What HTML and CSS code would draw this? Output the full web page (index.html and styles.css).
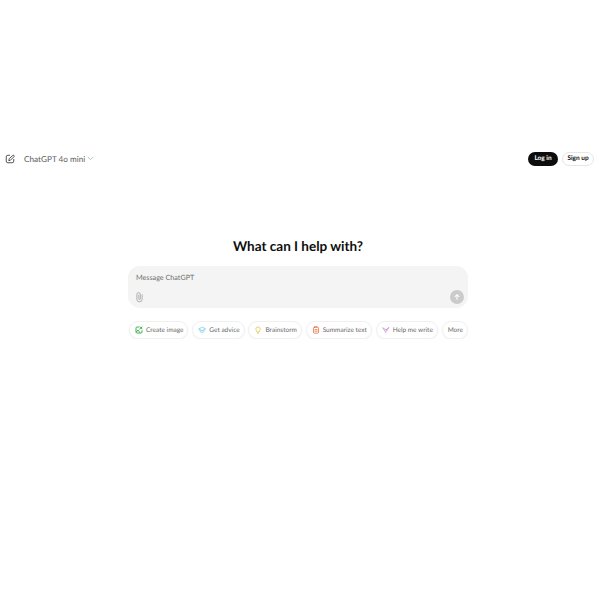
FILE: index.html
```html
<!DOCTYPE html>

<html lang="en-US">

<head>
	<meta charset="UTF-8" />
	<title>ChatGPT</title>
	<link rel="stylesheet" href="styles.css">
</head>

<body>
	<div class="page">
		<header class="topbar">
			<div class="topbar-left">
				<svg class="new-chat" viewBox="0 0 24 24" fill="none" stroke="currentColor" stroke-width="2.200" stroke-linecap="round" stroke-linejoin="round">
					<path d="M11 3H7a4 4 0 0 0-4 4v10a4 4 0 0 0 4 4h10a4 4 0 0 0 4-4v-4" />
					<path d="M18.500 3.500a2.100 2.100 0 0 1 3 3L13 15l-4 1 1-4z" />
				</svg>
				<span class="model">ChatGPT 4o mini</span>
				<svg class="caret" viewBox="0 0 12 12" fill="none" stroke="currentColor" stroke-width="1" stroke-linecap="round" stroke-linejoin="round">
					<path d="M2 4l4 4 4-4" />
				</svg>
			</div>
			<div class="topbar-right">
				<a class="btn btn-dark">Log in</a>
				<a class="btn btn-light">Sign up</a>
			</div>
		</header>

		<main class="main">
			<h1 class="title">What can I help with?</h1>

			<div class="composer">
				<div class="placeholder">Message ChatGPT</div>
				<div class="composer-row">
					<svg class="clip" viewBox="0 0 12 14" fill="none" stroke="currentColor" stroke-width="1" stroke-linecap="round">
						<path d="M9.500 4v6a3.500 3.500 0 0 1-7 0V3.500a2.300 2.300 0 0 1 4.600 0V9.500a1 1 0 0 1-2 0V4.500" />
					</svg>
					<span class="send">
						<svg viewBox="0 0 14 14" fill="none" stroke="#fff" stroke-width="1.800" stroke-linecap="round" stroke-linejoin="round">
							<path d="M7 11V3M3.800 6.200L7 3l3.200 3.200" />
						</svg>
					</span>
				</div>
			</div>

			<div class="chips">
				<a class="chip">
					<svg viewBox="0 0 12 12" fill="none" stroke="#35ae47" stroke-width="1.400" stroke-linecap="round" stroke-linejoin="round">
						<path d="M6 1.500H3A1.500 1.500 0 0 0 1.500 3v6A1.500 1.500 0 0 0 3 10.500h6A1.500 1.500 0 0 0 10.500 9V7" />
						<path d="M2 9l2.500-3L7 9.500" />
						<path d="M7 4.500L10.500 1.500M8 1.500l2.500 3" />
					</svg>
					Create image
				</a>
				<a class="chip">
					<svg viewBox="0 0 12 12" fill="none" stroke="#76d0eb" stroke-width="1.200" stroke-linecap="round" stroke-linejoin="round">
						<path d="M6 2L1 4.500 6 7l5-2.500z" />
						<path d="M3 6v2.200C4 9.600 8 9.600 9 8.200V6" />
					</svg>
					Get advice
				</a>
				<a class="chip">
					<svg viewBox="0 0 12 12" fill="none" stroke="#e2c541" stroke-width="1.200" stroke-linecap="round" stroke-linejoin="round">
						<path d="M4.500 8.500C4.300 7.500 2.700 6.800 2.700 4.700a3.300 3.300 0 0 1 6.600 0c0 2.100-1.600 2.800-1.800 3.800z" />
						<path d="M5 10.700h2" />
					</svg>
					Brainstorm
				</a>
				<a class="chip">
					<svg viewBox="0 0 12 12" fill="none" stroke="#e86b3a" stroke-width="1.200" stroke-linecap="round" stroke-linejoin="round">
						<rect x="2.200" y="1.800" width="7.600" height="9" rx="1.500" />
						<path d="M4.500 1.200h3M4.300 5.500h3.400M4.300 7.800h3.400" />
					</svg>
					Summarize text
				</a>
				<a class="chip">
					<svg viewBox="0 0 12 12" fill="none" stroke="#cb8bd0" stroke-width="1.100" stroke-linecap="round" stroke-linejoin="round">
						<path d="M1.500 3l4 6.500L7 7M1.500 3L6 5.500" />
						<path d="M6 5.500L10.500 2 8 6z" />
					</svg>
					Help me write
				</a>
				<a class="chip chip-more">More</a>
			</div>
		</main>
	</div>
</body>

</html>
```

FILE: styles.css
```css
body {
	margin: 0;
	font-family: "Lato", "Open Sans", sans-serif;
	text-rendering: geometricPrecision;
	color: #0d0d0d;
	background-color: white;
}

.page {
	width: 596px;
	padding-top: 150px;
}

.topbar {
	display: flex;
	justify-content: space-between;
	align-items: center;
	height: 17px;
	padding-left: 5px;
	padding-right: 2px;
}

.topbar-left {
	display: flex;
	align-items: center;
	color: #5d5d5d;
}

.new-chat {
	width: 10px;
	height: 10px;
	color: #444;
}

.model {
	margin-left: 9px;
	font-size: 8.200px;
}

.caret {
	width: 7px;
	height: 7px;
	margin-left: 2px;
	color: #8f8f8f;
}

.topbar-right {
	display: flex;
	gap: 4px;
}

.btn {
	display: block;
	height: 14px;
	line-height: 14px;
	border-radius: 7px;
	font-size: 6.500px;
	font-weight: 700;
	text-align: center;
	box-sizing: border-box;
}

.btn-dark {
	width: 30px;
	background-color: #0d0d0d;
	color: white;
}

.btn-light {
	width: 32px;
	line-height: 12px;
	border: 1px solid #e6e6e6;
	color: #0d0d0d;
}

.main {
	display: flex;
	flex-direction: column;
	align-items: center;
	padding-top: 62px;
}

.title {
	margin: 0;
	height: 34px;
	line-height: 34px;
	font-size: 13.500px;
	font-weight: 700;
}

.composer {
	width: 340px;
	height: 42px;
	box-sizing: border-box;
	margin-top: 3px;
	padding: 6px 4px 4px 8px;
	background-color: #f4f4f4;
	border-radius: 12px;
	display: flex;
	flex-direction: column;
	justify-content: space-between;
}

.placeholder {
	font-size: 7.200px;
	line-height: 11px;
	color: #6f6f6f;
}

.composer-row {
	display: flex;
	justify-content: space-between;
	align-items: center;
}

.clip {
	width: 9px;
	height: 12px;
	margin-left: -1px;
	color: #9a9a9a;
}

.send {
	display: flex;
	width: 14px;
	height: 14px;
	border-radius: 50%;
	background-color: #cbcbcb;
	align-items: center;
	justify-content: center;
}

.send svg {
	width: 8px;
	height: 8px;
}

.chips {
	display: flex;
	justify-content: space-between;
	width: 340px;
	margin-top: 13px;
	padding-left: 1px;
	box-sizing: border-box;
}

.chip {
	display: flex;
	align-items: center;
	gap: 3px;
	height: 18px;
	box-sizing: border-box;
	padding: 0 4px 0 5px;
	border: 1px solid #f0f0f0;
	border-radius: 9px;
	box-shadow: 0 1px 2px rgba(0, 0, 0, 0.05);
	font-size: 6.500px;
	color: #6a6a6a;
	white-space: nowrap;
}

.chip svg {
	width: 8px;
	height: 8px;
}
```
